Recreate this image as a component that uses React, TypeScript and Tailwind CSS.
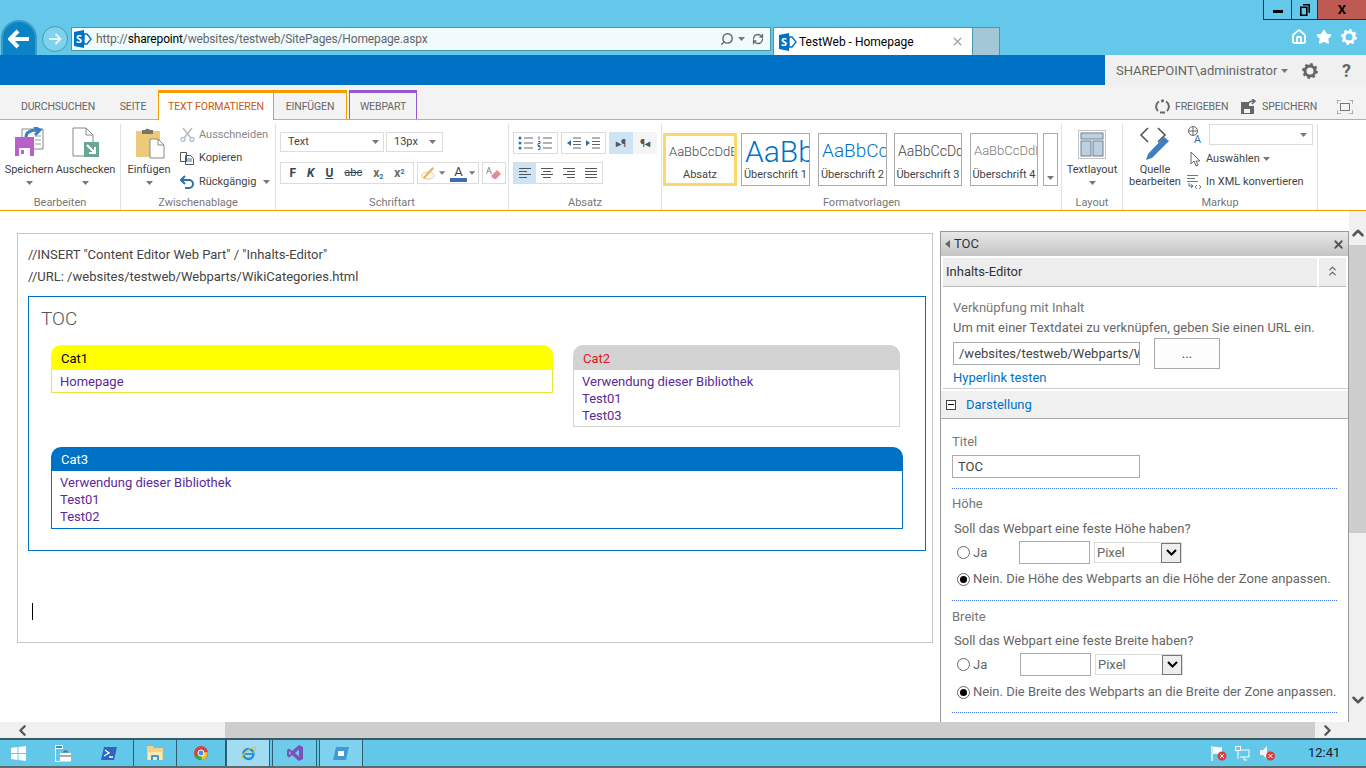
import { ChevronDown, ChevronLeft, ChevronRight, ChevronUp, Home, RefreshCw, Search, Star, X } from "lucide-react";
import type { ReactNode } from "react";

const Caret = ({ className = "" }: { className?: string }) => (
  <svg width="7" height="4" viewBox="0 0 7 4" className={className}><path d="M0 0h7L3.5 4z" fill="#777" /></svg>
);

const Gear = ({ size, color }: { size: number; color: string }) => (
  <svg width={size} height={size} viewBox="0 0 16 16">
    <circle cx="8" cy="8" r="5" fill="none" stroke={color} strokeWidth="3" />
    <circle cx="8" cy="8" r="6.700" fill="none" stroke={color} strokeWidth="2.400" strokeDasharray="2.600 2.660" />
  </svg>
);

const SpLogo = () => (
  <svg width="18" height="18" viewBox="0 0 18 18" className="shrink-0">
    <path d="M0 2l10-2v18L0 16z" fill="#0072c6" />
    <path d="M10 4h3l4 5-4 5h-3z" fill="#fff" stroke="#0072c6" strokeWidth="1.4" />
    <text x="2" y="13" fontSize="11" fontWeight="700" fill="#fff" fontFamily="Open Sans">S</text>
  </svg>
);

function WindowControls() {
  return (
    <div className="flex justify-end h-[20px]">
      <div className="flex h-[20px] border-b border-l border-[#22333b]">
        <div className="w-[28px] flex items-center justify-center border-r border-[#22333b]"><div className="w-[10px] h-[3px] bg-black mt-[3px]" /></div>
        <div className="w-[26px] flex items-center justify-center border-r border-[#22333b]">
          <svg width="10" height="12" viewBox="0 0 10 12"><path d="M3 .8h6.2v8M.8 3.2h6v8h-6z" fill="none" stroke="#000" strokeWidth="1.6" /></svg>
        </div>
        <div className="w-[48px] bg-[#bf5a52] flex items-center justify-center text-[13px] font-bold text-black leading-none">X</div>
      </div>
    </div>
  );
}

function AddressRow() {
  return (
    <div className="flex items-start h-[35px] relative">
      <div className="ml-[1px] mr-[5px] w-[36px] h-[35px] rounded-t-full bg-[#0a84c4] border-2 border-b-0 border-[#3c9ac4] flex items-center justify-center">
        <svg width="22" height="20" viewBox="0 0 22 20"><path d="M10 2L2 10l8 8M3 10h18" fill="none" stroke="#fff" strokeWidth="4" /></svg>
      </div>
      <div className="mt-[6px] w-[26px] h-[26px] rounded-full border border-[#4b98ae] bg-[#7fd2ee] flex items-center justify-center">
        <svg width="14" height="12" viewBox="0 0 14 12"><path d="M7.5 1L12.5 6l-5 5M1 6h11" fill="none" stroke="#e4f6fc" strokeWidth="2" /></svg>
      </div>
      <div className="ml-[3px] mt-[7px] w-[700px] h-[24px] bg-[#f1fafd] border border-[#4b98ae] flex items-center pl-[2px] pr-[6px]">
        <SpLogo />
        <span className="ml-[4px] text-[12px] tracking-[-0.15px] text-[#666] whitespace-nowrap">http://<span className="text-black">sharepoint</span>/websites/testweb/SitePages/Homepage.aspx</span>
        <div className="ml-auto flex items-center gap-[4px] text-[#666]">
          <Search size={14} className="-scale-x-100" strokeWidth={2.4} />
          <Caret />
          <RefreshCw size={12} strokeWidth={2.6} className="ml-[3px]" />
        </div>
      </div>
      <div className="ml-[2px] mt-[7px] w-[200px] h-[28px] bg-white border border-b-0 border-[#4b98ae] flex items-center pl-[5px] pr-[8px]">
        <SpLogo />
        <span className="ml-[2px] text-[12px] text-black whitespace-nowrap">TestWeb - Homepage</span>
        <X size={13} strokeWidth={3} className="ml-auto text-[#aaa]" />
      </div>
      <div className="mt-[7px] w-[27px] h-[28px] bg-[#a3c7d6] border border-b-0 border-l-0 border-[#4b98ae]" />
      <div className="ml-auto mr-[9px] mt-[9px] flex items-center gap-[9px] text-white">
        <Home size={16} strokeWidth={2.8} />
        <Star size={16} fill="#fff" />
        <Gear size={16} color="#fff" />
      </div>
    </div>
  );
}

function SuiteBar() {
  return (
    <div className="flex h-[30px]">
      <div className="w-[1105px] bg-[#0072c6]" />
      <div className="flex-1 bg-[#f0f0f0] flex items-center pl-[11px] pt-[2px] text-[#666]">
        <span className="text-[13px] whitespace-nowrap">SHAREPOINT\administrator</span>
        <Caret className="ml-[4px]" />
        <div className="ml-auto"><Gear size={16} color="#666" /></div>
        <span className="ml-[24px] mr-[15px] text-[18px] font-bold leading-none text-[#666]">?</span>
      </div>
    </div>
  );
}

function TabRow() {
  return (
    <div className="flex items-end h-[35px] bg-[#f3f3f3] border-b border-[#f5a623] text-[10.5px] tracking-[-0.1px] text-[#666]">
      <div className="ml-[8px] w-[100px] h-[26px] pt-[2px] flex items-center justify-center whitespace-nowrap">DURCHSUCHEN</div>
      <div className="w-[50px] h-[26px] pt-[2px] flex items-center justify-center">SEITE</div>
      <div className="w-[116px] h-[30px] -mb-px pt-[1px] bg-white border-t-[3px] border-x border-[#f59c00] flex items-center justify-center text-[#c9570c] whitespace-nowrap">TEXT FORMATIEREN</div>
      <div className="w-[73px] h-[29px] pt-[1px] border-t-[3px] border-r border-[#f59c00] flex items-center justify-center">EINFÜGEN</div>
      <div className="ml-[2px] w-[68px] h-[29px] pt-[1px] border-t-[3px] border-x border-[#8e5bd0] flex items-center justify-center">WEBPART</div>
      <div className="ml-auto h-[26px] pt-[1px] flex items-center">
        <svg width="15" height="15" viewBox="0 0 15 15" className="mr-[5px]"><path d="M4 2.5A6 6 0 0 0 3 12M11 2.5A6 6 0 0 1 12 12M5 13.5h5" fill="none" stroke="#666" strokeWidth="2" /><circle cx="7.5" cy="1.8" r="1.6" fill="#666" /></svg>
        <span className="w-[52px] whitespace-nowrap">FREIGEBEN</span>
        <svg width="16" height="15" viewBox="0 0 16 15" className="ml-[14px] mr-[5px]"><path d="M0 3h8v4h5v8H0z" fill="#666" /><rect x="3" y="10" width="6" height="4" fill="#f3f3f3" /><path d="M7 6c0-3 3-4 6-4M11 0l3 2-3 3" fill="none" stroke="#666" strokeWidth="1.5" /></svg>
        <span className="w-[53px] whitespace-nowrap">SPEICHERN</span>
        <svg width="16" height="14" viewBox="0 0 16 14" className="ml-[22px] mr-[13px]"><path d="M0 4V0h4M12 0h4v4M16 10v4h-4M4 14H0v-4" fill="none" stroke="#777" /><rect x="3.5" y="3.5" width="9" height="7" fill="none" stroke="#777" /></svg>
      </div>
    </div>
  );
}

function Group({ w, label, children }: { w: string; label: string; children: ReactNode }) {
  return (
    <div className={`${w} shrink-0 flex flex-col mt-[4px] border-r border-[#e1e1e1]`}>
      <div className="h-[70px] flex">{children}</div>
      <div className="h-[16px] text-center text-[11px] leading-[18px] text-[#777] whitespace-nowrap">{label}</div>
    </div>
  );
}

function BigBtn({ w, icon, label, caret = true }: { w: string; icon: ReactNode; label: ReactNode; caret?: boolean }) {
  return (
    <div className={`${w} flex flex-col items-center text-[11px] leading-[12px] text-[#444] text-center whitespace-nowrap`}>
      <div className="h-[37px] mt-[3px] flex items-start">{icon}</div>
      <div>{label}</div>
      {caret && <Caret className="mt-[5px]" />}
    </div>
  );
}

const Box = ({ className = "", children }: { className?: string; children: ReactNode }) => (
  <div className={`border border-[#dcdcdc] flex items-center ${className}`}>{children}</div>
);

function ListIcon({ kind }: { kind: "bul" | "num" | "out" | "ind" }) {
  const c = "#2f6ea8";
  return (
    <svg width="16" height="14" viewBox="0 0 16 14">
      {kind === "bul" && <><circle cx="2" cy="2" r="1.5" fill={c} /><circle cx="2" cy="7" r="1.5" fill={c} /><circle cx="2" cy="12" r="1.5" fill={c} /></>}
      {kind === "num" && <path d="M2 .5v3M1 5.5h2v2H1v2h2M1 10.5h2v3H1" fill="none" stroke={c} />}
      {kind === "out" && <path d="M5 4L1 7l4 3z" fill={c} />}
      {kind === "ind" && <path d="M1 4l4 3-4 3z" fill={c} />}
      <path d={kind === "bul" || kind === "num" ? "M6 2h9M6 7h9M6 12h9" : "M7 2h8M7 5.500h8M7 8.500h8M7 12h8"} stroke="#666" />
    </svg>
  );
}

function AlignIcon({ d }: { d: string }) {
  return <svg width="14" height="12" viewBox="0 0 14 12"><path d={d} stroke="#555" /></svg>;
}

function Style({ w, sample, label, color, size, border = "border border-[#aaa]", sampleH = "h-[34px] pl-[3px]" }: { w: string; sample: string; label: string; color: string; size: string; border?: string; sampleH?: string }) {
  return (
    <div className={`${w} h-[53px] ${border} flex flex-col items-center overflow-hidden bg-white`}>
      <div className={`w-full flex items-center overflow-hidden whitespace-nowrap font-light ${sampleH} ${color} ${size}`}>{sample}</div>
      <div className="text-[11px] leading-[14px] text-[#444] whitespace-nowrap">{label}</div>
    </div>
  );
}

function Ribbon() {
  return (
    <div className="flex h-[91px] bg-white border-b border-[#f59c00]">
      <Group w="w-[121px]" label="Bearbeiten">
        <BigBtn w="w-[58px]" label="Speichern" icon={
          <svg width="29" height="30" viewBox="0 0 29 30"><path d="M7 2h21v20H7z" fill="#fff" stroke="#888" /><path d="M20 9h6M20 13h6M20 17h6" stroke="#999" /><path d="M0 10h19v19H0z" fill="#b85fc8" /><path d="M4 21h11v8H4z" fill="#fff" /><rect x="6" y="23" width="3" height="4" fill="#b85fc8" /><path d="M11 10c0-5 5-7 12-7M19 0l6 3-5 5" fill="none" stroke="#3d7fc1" strokeWidth="3" /></svg>
        } />
        <BigBtn w="w-[55px]" label="Auschecken" icon={
          <svg width="28" height="31" viewBox="0 0 28 31"><path d="M1 1h13l7 7v21H1z" fill="#fff" stroke="#888" /><path d="M14 1v7h7" fill="none" stroke="#888" /><rect x="12" y="15" width="15" height="15" fill="#6aa691" /><path d="M15 18l8 8M17 26h6v-6" fill="none" stroke="#fff" strokeWidth="2" /></svg>
        } />
      </Group>
      <Group w="w-[155px]" label="Zwischenablage">
        <BigBtn w="w-[56px]" label="Einfügen" icon={
          <svg width="30" height="32" viewBox="0 0 30 32" className="ml-[2px]"><rect x="1" y="4" width="24" height="26" fill="#edc97a" /><path d="M7 5V3h3a3 3 0 0 1 5 0h3v4H7z" fill="#7d7468" /><path d="M15 12h8l6 6v13H15z" fill="#fff" stroke="#888" /><path d="M23 12v6h6" fill="none" stroke="#888" /></svg>
        } />
        <div className="flex flex-col text-[11px] text-[#444] ml-[3px] -mt-[1px]">
          <div className="h-[24px] flex items-center gap-[4px] text-[#888]">
            <svg width="15" height="15" viewBox="0 0 15 15"><path d="M3 1l8 10M12 1L4 11" stroke="#b8b8b8" strokeWidth="1.4" /><circle cx="3" cy="12.500" r="2" fill="none" stroke="#a9c4de" strokeWidth="1.4" /><circle cx="12" cy="12.500" r="2" fill="none" stroke="#a9c4de" strokeWidth="1.4" /></svg>
            Ausschneiden
          </div>
          <div className="h-[24px] flex items-center gap-[4px]">
            <svg width="15" height="13" viewBox="0 0 15 13"><path d="M.5.5h6v9h-6zM5.500 3.500h5l3 3v6h-8z" fill="#fff" stroke="#555" /><path d="M7 7h5M7 9h5" stroke="#3d7fc1" /></svg>
            Kopieren
          </div>
          <div className="h-[24px] flex items-center gap-[4px] whitespace-nowrap">
            <svg width="15" height="14" viewBox="0 0 15 14"><path d="M5 1L1 5l4 4M2 5h7a4 4 0 0 1 0 8H5" fill="none" stroke="#2f6ea8" strokeWidth="2" /></svg>
            Rückgängig
            <Caret className="ml-[3px]" />
          </div>
        </div>
      </Group>
      <Group w="w-[233px]" label="Schriftart">
        <div className="ml-[4px] mt-[8px] flex flex-col text-[11px] text-[#444]">
          <div className="flex gap-[2px]">
            <Box className="w-[104px] h-[20px] pl-[7px] pr-[4px] justify-between">Text<Caret /></Box>
            <Box className="w-[57px] h-[20px] pl-[7px] pr-[6px] justify-between">13px<Caret /></Box>
          </div>
          <div className="flex gap-[3px] mt-[10px]">
            <Box className="w-[134px] h-[22px] justify-around px-[3px] text-[12px]">
              <b className="text-[#33475b]">F</b>
              <b className="italic text-[#33475b]">K</b>
              <b className="underline text-[#33475b]">U</b>
              <span className="line-through text-[#33475b] text-[11px]">abc</span>
              <b className="text-[#6f6a55]">x<sub className="text-[7px] text-[#2f6ea8]">2</sub></b>
              <b className="text-[#6f6a55]">x<sup className="text-[7px] text-[#2f6ea8]">2</sup></b>
            </Box>
            <Box className="w-[62px] h-[22px] px-[3px] gap-[2px]">
              <svg width="18" height="16" viewBox="0 0 18 16"><path d="M3 14L14 2" stroke="#e9b25c" strokeWidth="2.500" /><ellipse cx="8" cy="11" rx="7" ry="4" fill="none" stroke="#f1b871" /></svg>
              <Caret />
              <div className="ml-[3px] flex flex-col items-center w-[17px]">
                <span className="text-[13px] leading-[13px] text-[#444]">A</span>
                <div className="w-[17px] h-[4px] bg-[#3d6fb0]" />
              </div>
              <Caret />
            </Box>
            <Box className="w-[24px] h-[22px] justify-center">
              <svg width="16" height="15" viewBox="0 0 16 15"><text x="0" y="8" fontSize="9" fill="#777" fontFamily="Open Sans">A</text><path d="M5 10l6-6 4 4-5 5H8z" fill="#e88a93" /></svg>
            </Box>
          </div>
        </div>
      </Group>
      <Group w="w-[153px]" label="Absatz">
        <div className="ml-[4px] mt-[8px] flex flex-col">
          <div className="flex gap-[3px]">
            <Box className="w-[45px] h-[22px] justify-around px-[2px]"><ListIcon kind="bul" /><ListIcon kind="num" /></Box>
            <Box className="w-[45px] h-[22px] justify-around px-[2px]"><ListIcon kind="out" /><ListIcon kind="ind" /></Box>
            <div className="w-[48px] h-[22px] flex text-[10px] font-bold text-[#555]">
              <div className="w-[24px] bg-[#cde4f5] flex items-center justify-center">▸¶</div>
              <div className="w-[24px] bg-[#f5f5f5] flex items-center justify-center">¶◂</div>
            </div>
          </div>
          <Box className="mt-[8px] w-[90px] h-[22px]">
            <div className="w-[22px] h-full bg-[#cde4f5] flex items-center justify-center"><AlignIcon d="M1 1.500h12M1 4.500h8M1 7.500h12M1 10.500h8" /></div>
            <div className="w-[22px] flex justify-center"><AlignIcon d="M1 1.500h12M3 4.500h8M1 7.500h12M3 10.500h8" /></div>
            <div className="w-[22px] flex justify-center"><AlignIcon d="M1 1.500h12M5 4.500h8M1 7.500h12M5 10.500h8" /></div>
            <div className="w-[22px] flex justify-center"><AlignIcon d="M1 1.500h12M1 4.500h12M1 7.500h12M1 10.500h12" /></div>
          </Box>
        </div>
      </Group>
      <Group w="w-[400px]" label="Formatvorlagen">
        <div className="ml-[1px] mt-[9px] flex items-start">
          <Style w="w-[74px]" sample="AaBbCcDdE" label="Absatz" color="text-[#444]" size="text-[13px]" border="border-[3px] border-[#fdd869]" sampleH="h-[32px] pl-[3px]" />
          <div className="w-[4px]" />
          <Style w="w-[69px]" sample="AaBb" label="Überschrift 1" color="text-[#0072c6]" size="text-[30px]" />
          <div className="w-[8px]" />
          <Style w="w-[69px]" sample="AaBbCc" label="Überschrift 2" color="text-[#0072c6]" size="text-[19px]" />
          <div className="w-[7px]" />
          <Style w="w-[68px]" sample="AaBbCcDd" label="Überschrift 3" color="text-[#444]" size="text-[14px]" />
          <div className="w-[8px]" />
          <Style w="w-[68px]" sample="AaBbCcDdE" label="Überschrift 4" color="text-[#777]" size="text-[13px]" />
          <div className="w-[5px]" />
          <div className="w-[15px] h-[53px] border border-[#aaa] flex items-end justify-center pb-[5px]"><Caret /></div>
        </div>
      </Group>
      <Group w="w-[61px]" label="Layout">
        <BigBtn w="w-full" label="Textlayout" icon={
          <svg width="28" height="29" viewBox="0 0 28 29" className="mt-[3px]"><rect x=".5" y=".5" width="27" height="28" fill="none" stroke="#888" strokeDasharray="1 1" /><rect x="3" y="3" width="22" height="6" fill="#bcd0e0" stroke="#6f7f8c" /><rect x="3" y="11" width="10" height="15" fill="#bcd0e0" stroke="#6f7f8c" /><rect x="15" y="11" width="10" height="15" fill="#bcd0e0" stroke="#6f7f8c" /></svg>
        } />
      </Group>
      <Group w="w-[195px]" label="Markup">
        <div className="w-[64px] flex flex-col items-center text-[11px] leading-[12px] text-[#444] text-center">
          <svg width="32" height="34" viewBox="0 0 32 34" className="mt-[2px] mb-[4px]"><path d="M9 2L2 9l7 7M19 2l7 7-7 7" fill="none" stroke="#555" strokeWidth="1.6" /><path d="M25 11l5 4-17 17-6 2 2-6z" fill="#3d7fc1" /></svg>
          Quelle<br />bearbeiten
        </div>
        <div className="flex flex-col text-[11px] text-[#444]">
          <div className="flex items-center">
            <svg width="17" height="18" viewBox="0 0 17 18"><circle cx="6" cy="5" r="4.500" fill="none" stroke="#666" /><path d="M1.500 5h9M6 .5v9" stroke="#666" /><text x="7" y="17" fontSize="11" fill="#2f6ea8" fontFamily="Open Sans">A</text></svg>
            <div className="ml-[5px] w-[104px] h-[21px] border border-[#dcdcdc] flex items-center justify-end pr-[5px]"><Caret /></div>
          </div>
          <div className="h-[24px] flex items-center mt-[2px]">
            <svg width="12" height="16" viewBox="0 0 12 16" className="ml-[3px]"><path d="M1 1v12l3-3 2 5 2-1-2-4h4z" fill="#fff" stroke="#666" /></svg>
            <span className="ml-[4px] whitespace-nowrap">Auswählen</span>
            <Caret className="ml-[3px]" />
          </div>
          <div className="h-[24px] flex items-center">
            <svg width="15" height="16" viewBox="0 0 15 16"><path d="M0 1.500h11M0 4.500h8M0 7.500h11" stroke="#777" /><path d="M2 9v3h4M4 10.500L6 12l-2 2" fill="none" stroke="#2f6ea8" /><path d="M10 11l-2 2 2 2M12 11l2 2-2 2" fill="none" stroke="#777" /></svg>
            <span className="ml-[4px] whitespace-nowrap">In XML konvertieren</span>
          </div>
        </div>
      </Group>
    </div>
  );
}

function CatCard({ w, title, head, items, border, body }: { w: string; title: string; head: string; items: string[]; border: string; body: string }) {
  return (
    <div className={`${w} shrink-0`}>
      <div className={`rounded-t-[10px] pl-[10px] text-[13px] ${head}`}>{title}</div>
      <div className={`border border-t-0 ${border} ${body} px-[8px] text-[13px] leading-[17px] text-[#5b2a98]`}>
        {items.map((t) => <div key={t}>{t}</div>)}
      </div>
    </div>
  );
}

function Editor() {
  return (
    <div className="w-[940px] shrink-0 pl-[17px] pt-[22px]">
      <div className="w-[916px] h-[410px] border border-[#c6c6c6] pl-[10px] text-[13px] text-[#444]">
        <div className="mt-[10px] leading-[22px] whitespace-nowrap">//INSERT "Content Editor Web Part" / "Inhalts-Editor"</div>
        <div className="leading-[22px] whitespace-nowrap">//URL: /websites/testweb/Webparts/WikiCategories.html</div>
        <div className="mt-[8px] w-[898px] h-[255px] border border-[#0072c6]">
          <div className="pl-[12px] pt-[8px] text-[19px] leading-[28px] text-[#555] font-light">TOC</div>
          <div className="mt-[12px] ml-[22px] flex items-start h-[82px]">
            <CatCard w="w-[502px]" title="Cat1" head="h-[25px] leading-[27px] bg-[#ffff00] text-black" border="border-[#e8e83c]" body="pt-[3px] pb-[2px]" items={["Homepage"]} />
            <CatCard w="w-[327px] ml-[20px]" title="Cat2" head="h-[25px] leading-[27px] bg-[#d3d3d3] text-[#e8141c]" border="border-[#d3d3d3]" body="pt-[3px] pb-[2px]" items={["Verwendung dieser Bibliothek", "Test01", "Test03"]} />
          </div>
          <div className="mt-[20px] ml-[22px] flex">
            <CatCard w="w-[852px]" title="Cat3" head="h-[24px] leading-[26px] bg-[#0072c6] text-white" border="border-[#0072c6]" body="pt-[3px] pb-[3px]" items={["Verwendung dieser Bibliothek", "Test01", "Test02"]} />
          </div>
        </div>
        <div className="mt-[52px] ml-[4px] w-px h-[17px] bg-black" />
      </div>
    </div>
  );
}

const Radio = ({ on = false }: { on?: boolean }) => (
  <span className="w-[13px] h-[13px] rounded-full border border-[#666] bg-white flex items-center justify-center shrink-0">
    {on && <span className="w-[7px] h-[7px] rounded-full bg-black" />}
  </span>
);

const Dots = ({ className = "" }: { className?: string }) => (
  <div className={`ml-[11px] w-[385px] border-t border-dotted border-[#3b73d9] ${className}`} />
);

function SizeRow({ inputClass }: { inputClass: string }) {
  return (
    <div className="mt-[2px] flex items-start h-[23px] text-[13px] text-[#666]">
      <div className="ml-[16px] h-[23px] flex items-center gap-[3px] w-[62px]"><Radio /><span>Ja</span></div>
      <div className={`${inputClass} w-[71px] h-[23px] border border-[#aaa]`} />
      <div className="ml-[4px] mt-[1px] w-[88px] h-[21px] border border-[#dcdcdc] flex items-center pl-[2px] justify-between">
        Pixel
        <div className="w-[20px] h-[20px] bg-[#eee] border border-[#777] flex items-center justify-center">
          <svg width="11" height="7" viewBox="0 0 11 7"><path d="M1 1l4.500 4.500L10 1" fill="none" stroke="#000" strokeWidth="2" /></svg>
        </div>
      </div>
    </div>
  );
}

function ToolPane() {
  return (
    <div className="w-[409px] h-[491px] mt-[20px] shrink-0 border-x border-[#9a9a9a] overflow-hidden text-[13px] text-[#666]">
      <div className="h-[25px] border-t border-[#9a9a9a] bg-gradient-to-b from-[#e8e8e8] to-[#c4c4c4] flex items-center pl-[4px] pr-[3px]">
        <svg width="5" height="8" viewBox="0 0 5 8"><path d="M5 0v8L0 4z" fill="#666" /></svg>
        <span className="ml-[4px] text-black/80">TOC</span>
        <X size={13} strokeWidth={3.4} className="ml-auto text-[#555]" />
      </div>
      <div className="mt-[2px] ml-[2px] flex gap-[2px] h-[29px]">
        <div className="w-[374px] bg-[#ededed] border-b border-[#bbb] pl-[3px] flex items-center text-[#333]">Inhalts-Editor</div>
        <div className="w-[27px] bg-[#ededed] border-b border-[#bbb] flex flex-col items-center pt-[5px] -space-y-[9px]">
          <ChevronUp size={11} strokeWidth={2.6} />
          <ChevronUp size={11} strokeWidth={2.6} className="mt-[3px]" />
        </div>
      </div>
      <div className="pl-[12px] pt-[11px]">
        <div className="leading-[20px] text-[#777]">Verknüpfung mit Inhalt</div>
        <div className="leading-[20px] whitespace-nowrap">Um mit einer Textdatei zu verknüpfen, geben Sie einen URL ein.</div>
        <div className="flex items-start h-[31px]">
          <div className="mt-[4px] w-[187px] h-[23px] border border-[#aaa] pl-[5px] leading-[21px] text-[#444] overflow-hidden whitespace-nowrap">/websites/testweb/Webparts/W</div>
          <div className="ml-[14px] w-[66px] h-[31px] border border-[#aaa] bg-[#fdfdfd] flex items-center justify-center text-[#444]">...</div>
        </div>
        <div className="h-[19px] leading-[18px] text-[#0072c6]">Hyperlink testen</div>
      </div>
      <div className="ml-[2px] border-t border-[#ccc]" />
      <div className="mt-[2px] h-[28px] bg-[#f0f0f0] border-b border-[#aaa] flex items-center pl-[5px]">
        <div className="w-[10px] h-[10px] border border-[#444] bg-white flex items-center justify-center"><div className="w-[6px] h-px bg-black" /></div>
        <span className="ml-[10px] text-[#0072c6]">Darstellung</span>
      </div>
      <div className="pl-[11px] mt-[13px] leading-[20px] text-[#777]">Titel</div>
      <div className="ml-[11px] mt-[3px] w-[188px] h-[23px] border border-[#aaa] pl-[5px] leading-[21px] text-[#444]">TOC</div>
      <Dots className="mt-[10px]" />
      <div className="pl-[11px] mt-[5px] leading-[20px] text-[#777]">Höhe</div>
      <div className="pl-[13px] mt-[5px] leading-[20px]">Soll das Webpart eine feste Höhe haben?</div>
      <SizeRow inputClass="" />
      <div className="ml-[16px] mt-[5px] h-[20px] flex items-center gap-[3px] whitespace-nowrap"><Radio on />Nein. Die Höhe des Webparts an die Höhe der Zone anpassen.</div>
      <Dots className="mt-[11px]" />
      <div className="pl-[11px] mt-[6px] leading-[20px] text-[#777]">Breite</div>
      <div className="pl-[13px] mt-[4px] leading-[20px]">Soll das Webpart eine feste Breite haben?</div>
      <SizeRow inputClass="ml-[1px]" />
      <div className="ml-[16px] mt-[6px] h-[20px] flex items-center gap-[3px] whitespace-nowrap"><Radio on />Nein. Die Breite des Webparts an die Breite der Zone anpassen.</div>
      <Dots className="mt-[10px]" />
    </div>
  );
}

function VScroll() {
  return (
    <div className="flex-1 flex flex-col items-center bg-[#f0f0f0]">
      <div className="h-[34px] w-full flex items-end justify-center pb-[3px]"><ChevronUp size={18} strokeWidth={3.4} className="text-[#555]" /></div>
      <div className="w-full h-[288px] bg-[#cdcdcd]" />
      <div className="mt-auto h-[31px] w-full flex justify-center"><ChevronDown size={18} strokeWidth={3.4} className="text-[#555]" /></div>
    </div>
  );
}

function HScroll() {
  return (
    <div className="flex h-[16px] bg-[#f0f0f0]">
      <div className="w-[225px] pl-[14px] flex items-center"><ChevronLeft size={17} strokeWidth={3.4} className="text-[#555]" /></div>
      <div className="w-[1090px] bg-[#cdcdcd]" />
      <div className="pl-[4px] flex items-center"><ChevronRight size={17} strokeWidth={3.4} className="text-[#555]" /></div>
    </div>
  );
}

const Cell = ({ w, active = false, children }: { w: string; active?: boolean; children: ReactNode }) => (
  <div className={`${w} h-full flex items-center justify-center border-r border-[#2e5f70] ${active ? "bg-[#a2dcf2] border-l" : ""}`}>{children}</div>
);

function Taskbar() {
  return (
    <div className="flex h-[30px] bg-[#63c7ea] border-y-2 border-[#3a5a66] border-b-[#5a6a70] items-center">
      <div className="w-[134px] h-full flex items-center border-r border-[#2e5f70]">
        <svg width="15" height="15" viewBox="0 0 15 15" className="ml-[11px]"><path d="M0 2l6.500-1v6H0zM7.500 1L15 0v7H7.500zM0 8h6.500v6L0 13zM7.500 8H15v7l-7.500-1z" fill="#fff" /></svg>
        <svg width="16" height="17" viewBox="0 0 16 17" className="ml-[29px]"><path d="M.5.5h7v3h-7zM.5 3.500v13h4" fill="none" stroke="#fff" /><rect x="1" y="1" width="6" height="2" fill="#2f8fd1" /><path d="M5 8h11v8.500H5z" fill="#fff" /><path d="M5 11h11M9 8V6h3v2" stroke="#555" fill="none" /></svg>
        <svg width="16" height="13" viewBox="0 0 16 13" className="ml-[30px]"><path d="M3 0h13l-3 13H0z" fill="#2f64c4" /><path d="M4 3l4 3-5 3M8 10h4" fill="none" stroke="#fff" strokeWidth="1.300" /></svg>
      </div>
      <Cell w="w-[43px]">
        <svg width="16" height="14" viewBox="0 0 16 14"><path d="M0 0h6l1 2h9v12H0z" fill="#f1d488" /><path d="M1 6h14v8H1z" fill="#fbeab6" /><path d="M4 14v-4a1 1 0 0 1 1-1h6a1 1 0 0 1 1 1v4h-2v-3H6v3z" fill="#3f9ad6" /></svg>
      </Cell>
      <Cell w="w-[49px]">
        <svg width="14" height="14" viewBox="0 0 14 14"><circle cx="7" cy="7" r="7" fill="#d8443a" /><path d="M7 7L1 11a7 7 0 0 0 7 3z" fill="#3ca655" /><path d="M7 7l6.500-1A7 7 0 0 1 8 14z" fill="#f4c430" /><circle cx="7" cy="7" r="3" fill="#4a8af0" stroke="#fff" /></svg>
      </Cell>
      <Cell w="w-[44px]" active>
        <svg width="17" height="17" viewBox="0 0 17 17"><circle cx="8.500" cy="9" r="5" fill="none" stroke="#1f8fd8" strokeWidth="2.400" /><path d="M3.500 9h10" stroke="#1f8fd8" strokeWidth="1.800" /><path d="M2 14C1 10 10 2 15 2c1.500 1 0 4-2 6" fill="none" stroke="#e4c22c" strokeWidth="1.200" /></svg>
      </Cell>
      <div className="w-[2px]" />
      <div className="w-[45px] h-full flex items-center justify-center border-x border-[#2e5f70] bg-[#6fcbec]">
        <svg width="16" height="16" viewBox="0 0 16 16"><path d="M12 0l4 2v12l-4 2-7-6-3 2.500L0 11V5l2-1.500L5 6zM12 4.500L8 8l4 3.500zM2 6v4l2-2z" fill="#7b52b8" /></svg>
      </div>
      <div className="w-[2px]" />
      <div className="w-[44px] h-full flex items-center justify-center border-x border-[#2e5f70] bg-[#7fd2ef]">
        <svg width="16" height="13" viewBox="0 0 16 13"><path d="M3 0h13l-3 13H0z" fill="#3f9ad6" /><rect x="5" y="4" width="6" height="5" fill="#fff" /></svg>
      </div>
      <div className="ml-auto flex items-center">
        <svg width="16" height="16" viewBox="0 0 16 16"><path d="M1 1v15" stroke="#fff" strokeWidth="1.300" /><path d="M2 2c3-1 5 1 9 0v7c-4 1-6-1-9 0z" fill="#fff" /><circle cx="11" cy="11" r="4.500" fill="#dc3c3c" /><path d="M9 9l4 4M13 9l-4 4" stroke="#fff" /></svg>
        <svg width="15" height="15" viewBox="0 0 15 15" className="ml-[8px]"><rect x=".5" y=".5" width="5" height="4" fill="none" stroke="#fff" /><path d="M3 5v8M5 4h9v7H5M9 11v3h3" fill="none" stroke="#fff" /></svg>
        <svg width="16" height="16" viewBox="0 0 16 16" className="ml-[9px]"><path d="M1 5h3l4-4v13L4 10H1z" fill="#eef6fa" /><circle cx="11.500" cy="11" r="4.500" fill="#dc3c3c" /><path d="M9.500 9l4 4M13.500 9l-4 4" stroke="#fff" /></svg>
        <span className="ml-[33px] w-[58px] text-[13px] text-[#1a1a1a]">12:41</span>
      </div>
    </div>
  );
}

export default function App() {
  return (
    <div className="w-[1366px] h-[768px] overflow-hidden flex flex-col bg-white font-['Roboto',sans-serif]">
      <div className="h-[55px] bg-[#64c8ea] shrink-0">
        <WindowControls />
        <AddressRow />
      </div>
      <SuiteBar />
      <TabRow />
      <Ribbon />
      <div className="flex h-[511px]">
        <Editor />
        <ToolPane />
        <VScroll />
      </div>
      <HScroll />
      <Taskbar />
    </div>
  );
}
